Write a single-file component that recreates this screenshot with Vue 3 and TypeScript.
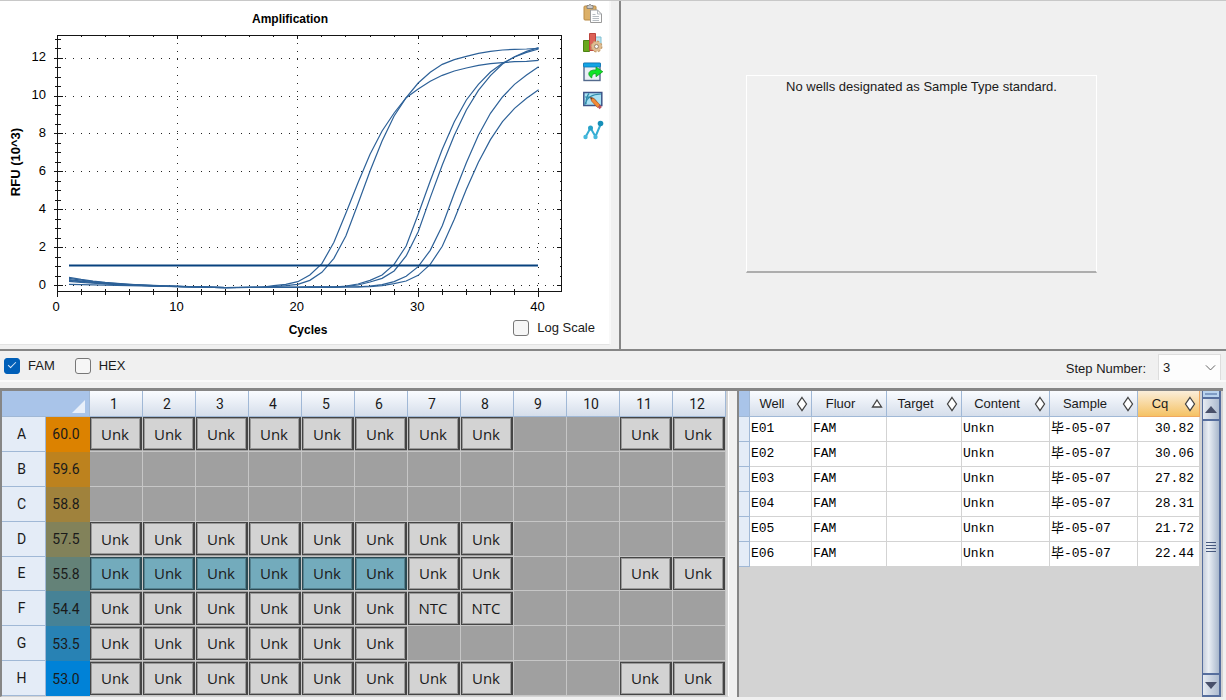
<script setup lang="ts">
import { ref } from 'vue'

interface Result {
  well: string
  fluor: string
  target: string
  content: string
  sample: string
  cq: string
}

interface PlateRow {
  name: string
  temp: string
  color: string
  wells: string[]
}

const logScale = ref(false)
const fam = ref(true)
const hex = ref(false)
const step = ref('3')

const xOf = (cycle: number): number => 57 + cycle * 12.04
const yOf = (rfu: number): number => 284.5 - rfu * 18.95

const xMinor = Array.from({ length: 20 }, (_, i) => i * 2 + 2)
const xMajor = [0, 10, 20, 30, 40]
const yMajor = [0, 2, 4, 6, 8, 10, 12]
const yMinor = Array.from({ length: 27 }, (_, i) => i * 0.5)

/* Each trace lists plot heights, three units per drawing unit, from its first cycle up to cycle 40. */
const traces: { start: number; first: number; values: number[] }[] = [
  { start: 832, first: 18, values: [854, 850, 842, 822, 788, 724, 636, 545, 460, 390, 336, 290, 264, 241, 223, 210, 201, 193, 188, 185, 182, 181, 178] },
  { start: 836, first: 18, values: [857, 854, 850, 838, 814, 772, 704, 608, 510, 420, 345, 290, 246, 214, 190, 176, 166, 157, 151, 147, 145, 144, 142] },
  { start: 829, first: 24, values: [855, 849, 838, 822, 790, 735, 640, 540, 445, 362, 297, 250, 213, 187, 168, 154, 144] },
  { start: 841, first: 24, values: [856, 852, 843, 832, 810, 765, 692, 590, 492, 403, 327, 268, 224, 189, 167, 151, 140] },
  { start: 838, first: 26, values: [855, 851, 842, 826, 797, 748, 674, 577, 485, 403, 337, 288, 250, 222, 197] },
  { start: 850, first: 26, values: [857, 854, 848, 840, 823, 790, 736, 655, 565, 484, 416, 362, 322, 292, 266] },
]

const tracePoints = traces.map(({ start, first, values }) => {
  const points: string[] = []
  for (let c = 1; c < first; c++) {
    const floor = c < 14 ? 860 - (14 - c) * 0.6 : 860 - (c - 14) * 0.2
    const y = floor - (floor - start) * Math.exp(-(c - 1) / 3.2)
    points.push(`${xOf(c)},${y / 3}`)
  }
  values.forEach((v, i) => points.push(`${xOf(first + i)},${v / 3}`))
  return points.join(' ')
})

const plateColumns = Array.from({ length: 12 }, (_, i) => i + 1)
const fill = (n: number, tail = 0): string[] =>
  plateColumns.map((c) => (c <= n || c > 12 - tail ? 'Unk' : ''))

const plate: PlateRow[] = [
  { name: 'A', temp: '60.0', color: '#dc8200', wells: fill(8, 2) },
  { name: 'B', temp: '59.6', color: '#bd821e', wells: fill(0) },
  { name: 'C', temp: '58.8', color: '#a0823c', wells: fill(0) },
  { name: 'D', temp: '57.5', color: '#82825a', wells: fill(8) },
  { name: 'E', temp: '55.8', color: '#648278', wells: fill(8, 2) },
  { name: 'F', temp: '54.4', color: '#468296', wells: fill(6).map((w, i) => (i === 6 || i === 7 ? 'NTC' : w)) },
  { name: 'G', temp: '53.5', color: '#2882b4', wells: fill(6) },
  { name: 'H', temp: '53.0', color: '#0082d7', wells: fill(8, 2) },
]
const isSelected = (row: string, index: number): boolean => row === 'E' && index < 6

const headers = ['Well', 'Fluor', 'Target', 'Content', 'Sample', 'Cq']
const results: Result[] = ['30.82', '30.06', '27.82', '28.31', '21.72', '22.44'].map((cq, i) => ({
  well: `E0${i + 1}`,
  fluor: 'FAM',
  target: '',
  content: 'Unkn',
  sample: '毕-05-07',
  cq,
}))
</script>

<template>
  <main class="app">
    <section class="top">
      <div class="chart-panel">
        <svg class="chart" viewBox="0 0 575 343" role="img" aria-label="Amplification">
          <g class="grid">
            <line v-for="v in yMajor" :key="'gy' + v" x1="65" x2="561" :y1="yOf(v)" :y2="yOf(v)" />
            <line v-for="v in xMajor.slice(1)" :key="'gx' + v" y1="42" y2="290" :x1="xOf(v)" :x2="xOf(v)" />
          </g>
          <g class="axis">
            <rect x="57.5" y="34.5" width="504" height="256" />
            <line v-for="v in yMinor" :key="'my' + v" x1="55" x2="61" :y1="yOf(v)" :y2="yOf(v)" />
            <line v-for="v in yMinor" :key="'ry' + v" x1="560" x2="562" :y1="yOf(v)" :y2="yOf(v)" />
            <line v-for="v in yMajor" :key="'ay' + v" x1="54" x2="63" :y1="yOf(v)" :y2="yOf(v)" />
            <line v-for="v in yMajor" :key="'by' + v" x1="557" x2="562" :y1="yOf(v)" :y2="yOf(v)" />
            <line v-for="v in xMinor" :key="'mx' + v" y1="288" y2="294" :x1="xOf(v)" :x2="xOf(v)" />
            <line v-for="v in xMinor" :key="'tx' + v" y1="34" y2="36" :x1="xOf(v)" :x2="xOf(v)" />
            <line v-for="v in xMajor" :key="'ax' + v" y1="287" y2="296" :x1="xOf(v) + (v ? 0 : 0.5)" :x2="xOf(v) + (v ? 0 : 0.5)" />
            <line v-for="v in xMajor" :key="'bx' + v" y1="34" y2="38" :x1="xOf(v)" :x2="xOf(v)" />
          </g>
          <polyline v-for="(p, i) in tracePoints" :key="i" class="trace" :points="p" />
          <line class="threshold" x1="69" x2="538" y1="264.5" y2="264.5" />
          <g class="ticks">
            <text v-for="v in yMajor" :key="'ly' + v" x="46" :y="yOf(v) + 3" text-anchor="end">{{ v }}</text>
            <text v-for="v in xMajor" :key="'lx' + v" :x="xOf(v) - 1" y="310" text-anchor="middle">{{ v }}</text>
          </g>
          <g class="titles">
            <text x="290" y="22" text-anchor="middle">Amplification</text>
            <text x="308" y="333" text-anchor="middle">Cycles</text>
            <text class="y-title" transform="translate(20 161) rotate(-90)" text-anchor="middle">RFU (10^3)</text>
          </g>
        </svg>
        <div class="tools">
          <button type="button" aria-label="Copy">
            <svg viewBox="0 0 20 20">
              <rect x="1" y="2" width="12" height="14" rx="1" fill="#dcb068" stroke="#b98a45" />
              <path d="M4 1.5h1.500Q7-.8 8.500 1.500H10v3H4z" fill="#c9c9c9" stroke="#777" stroke-width=".8" />
              <path d="M7.500 6h7l4 4v8.500h-11z" fill="#fdfdfd" stroke="#9a9a9a" />
              <path d="M14.500 6v4h4M9.500 12.500h6.500M9.500 14.500h6.500M9.500 16.500h6.500M9.500 10.500h3" fill="none" stroke="#a3abb3" stroke-width=".8" />
            </svg>
          </button>
          <button type="button" aria-label="Chart settings">
            <svg viewBox="0 0 20 20">
              <path d="M.5 7.500h6v11h-6z" fill="#69a71c" stroke="#4d8314" />
              <path d="M12.500 4h5.500v10h-5.500z" fill="#bde6f1" stroke="#80bfd2" />
              <path d="M6.500.5h6v17h-6z" fill="#dc6258" stroke="#bc453d" />
              <circle cx="13.500" cy="13.500" r="5" fill="#deb985" stroke="#c79d6c" stroke-width="2" stroke-dasharray="2.200 1.700" />
              <circle cx="13.500" cy="13.500" r="4.800" fill="#dfbc90" />
              <circle cx="13.500" cy="13.500" r="2" fill="#f6f6f4" stroke="#9c8267" />
            </svg>
          </button>
          <button type="button" aria-label="Export">
            <svg viewBox="0 0 20 20">
              <rect x="1" y="1.500" width="16" height="17" fill="#e9eef4" stroke="#53698c" stroke-width="1.400" />
              <rect x=".5" y="1" width="17" height="4" rx="1" fill="#12a4e4" stroke="#0876b8" stroke-width=".8" />
              <path d="M13 5l6.800 4.700-6.800 5v-3c-2.800-.3-4 .8-4.300 4.300C3.500 12.500 5.500 7.500 13 8z" fill="#0ee525" stroke="#149a25" stroke-width=".8" />
            </svg>
          </button>
          <button type="button" aria-label="Edit plot">
            <svg viewBox="0 0 20 20">
              <rect x=".8" y="1.500" width="18" height="13" fill="#a9e2f4" stroke="#3d5488" stroke-width="1.500" />
              <path d="M2 13.500C4 5 10 3 18 3M2 6C9 5 13 8 15 14M6 2.500C3 6 3 9 3 13" fill="none" stroke="#318cab" stroke-width="1.200" />
              <path d="M7.500 6.500l3.500 1 6 6.500-2.500 2.500-6-6.500z" fill="#f28a35" stroke="#b45420" stroke-width=".7" />
              <path d="M7.500 6.500l2.200.7-1.600 1.600z" fill="#623c25" />
              <path d="M14.800 16.300l2.300-2.300 1.800 2-2.300 2.300z" fill="#bd5260" />
            </svg>
          </button>
          <button type="button" aria-label="Show trace">
            <svg viewBox="0 0 20 20">
              <path d="M2.500 17L7.500 8l5 8.500L18 3.500" fill="none" stroke="#35acd2" stroke-width="2" />
              <circle cx="2.500" cy="17" r="2.200" fill="#46b9dc" />
              <circle cx="7.500" cy="8" r="2.500" fill="#28a2c8" />
              <circle cx="12.500" cy="17" r="2.200" fill="#46b9dc" />
              <circle cx="17.500" cy="3.500" r="2.800" fill="#168fb8" />
            </svg>
          </button>
        </div>
        <label class="check log"><input v-model="logScale" type="checkbox" />Log Scale</label>
      </div>
      <div class="standard-panel">
        <p class="notice">No wells designated as Sample Type standard.</p>
      </div>
    </section>

    <section class="filters">
      <label class="check"><input v-model="fam" type="checkbox" />FAM</label>
      <label class="check"><input v-model="hex" type="checkbox" />HEX</label>
      <label class="step-label" for="step">Step Number:</label>
      <span class="select">
        <select id="step" v-model="step">
          <option>1</option>
          <option>2</option>
          <option>3</option>
        </select>
        <svg viewBox="0 0 12 8"><path d="M1 1.500l5 5 5-5" fill="none" stroke="#555" /></svg>
      </span>
    </section>

    <section class="bottom">
      <div class="plate-panel">
        <table class="plate">
          <colgroup>
            <col class="c-row" />
            <col class="c-row" />
            <col v-for="c in plateColumns" :key="c" />
          </colgroup>
          <thead>
            <tr>
              <th colspan="2" class="corner"><svg viewBox="0 0 13 13"><path d="M13 0v13H0z" fill="#e8effa" /></svg></th>
              <th v-for="c in plateColumns" :key="c" scope="col">{{ c }}</th>
            </tr>
          </thead>
          <tbody>
            <tr v-for="r in plate" :key="r.name">
              <th scope="row">{{ r.name }}</th>
              <td class="temp" :style="{ backgroundColor: r.color }">{{ r.temp }}</td>
              <td v-for="(w, i) in r.wells" :key="i" class="cell">
                <div v-if="w" class="well" :class="{ selected: isSelected(r.name, i) }">{{ w }}</div>
              </td>
            </tr>
          </tbody>
        </table>
      </div>

      <div class="results-panel">
        <div class="results-body">
          <table class="results">
            <colgroup>
              <col class="w-mark" />
              <col class="w-well" />
              <col class="w-mid" />
              <col class="w-mid" />
              <col class="w-wide" />
              <col class="w-wide" />
              <col class="w-well" />
            </colgroup>
            <thead>
              <tr>
                <td class="mark"></td>
                <th v-for="h in headers" :key="h" scope="col" :class="{ active: h === 'Cq' }">
                  <div class="head">
                    <span>{{ h }}</span>
                    <svg viewBox="0 0 12 16">
                      <path v-if="h === 'Fluor'" d="M6 4l4.500 7h-9z" />
                      <path v-else d="M6 1.500l4.500 6.500L6 14.500 1.500 8z" />
                    </svg>
                  </div>
                </th>
              </tr>
            </thead>
            <tbody>
              <tr v-for="r in results" :key="r.well">
                <td class="mark"></td>
                <td>{{ r.well }}</td>
                <td>{{ r.fluor }}</td>
                <td>{{ r.target }}</td>
                <td>{{ r.content }}</td>
                <td>{{ r.sample }}</td>
                <td class="num">{{ r.cq }}</td>
              </tr>
            </tbody>
          </table>
        </div>
        <div class="scrollbar">
          <div class="split"></div>
          <button type="button" aria-label="Scroll up"><svg viewBox="0 0 12 7"><path d="M6 0l6 7H0z" fill="#48506a" /></svg></button>
          <div class="thumb"><i></i><i></i><i></i><i></i></div>
          <button type="button" aria-label="Scroll down"><svg viewBox="0 0 12 7"><path d="M0 0h12L6 7z" fill="#48506a" /></svg></button>
        </div>
      </div>
    </section>
  </main>
</template>

<style>
body {
  margin: 0;
  background: #f0f0f0;
}
</style>

<style scoped>
.app {
  box-sizing: border-box;
  min-height: 100vh;
  display: flex;
  flex-direction: column;
  background: #f0f0f0;
  color: #1a1a1a;
  font: 13px/20px "Liberation Sans", Arial, sans-serif;
}
.top {
  display: grid;
  grid-template-columns: 619fr 607fr;
  border-top: 1px solid #c8c8c8;
  border-bottom: 2px solid #868686;
}
.chart-panel {
  position: relative;
  display: flex;
  align-items: flex-start;
  margin: 0 8px 4px 0;
  background: #fff;
  border-right: 2px solid #f8f8f8;
  border-bottom: 1px solid #e3e3e3;
}
.chart {
  flex: 1;
  min-width: 0;
  display: block;
  font-size: 12px;
}
.grid line {
  stroke: #222;
  stroke-dasharray: 1 7;
  shape-rendering: crispEdges;
}
.axis line,
.axis rect {
  fill: none;
  stroke: #151515;
  shape-rendering: crispEdges;
}
.trace {
  fill: none;
  stroke: #2d6198;
  stroke-width: 1.2;
}
.threshold {
  stroke: #08427f;
  stroke-width: 2.2;
}
.ticks {
  font-size: 13px;
}
.titles {
  font-weight: bold;
}
.y-title {
  font-size: 13px;
}
.tools {
  display: flex;
  flex-direction: column;
  gap: 9px;
  width: 26px;
  padding: 3px 0 0 8px;
}
.tools button {
  width: 20px;
  height: 20px;
  padding: 0;
  border: 0;
  background: none;
}
.tools svg {
  display: block;
  width: 20px;
  height: 20px;
  overflow: visible;
}
.check {
  display: flex;
  align-items: center;
  gap: 8px;
}
.check input {
  appearance: none;
  display: grid;
  place-items: center;
  box-sizing: border-box;
  width: 16px;
  height: 16px;
  margin: 0;
  border: 1px solid #777;
  border-radius: 3px;
  background: #f6f6f6;
}
.check input:checked {
  border-color: #005fb8;
  background: #005fb8;
}
.check input:checked::after {
  content: "";
  width: 7px;
  height: 3px;
  margin-bottom: 3px;
  border-left: 1px solid #dbeafa;
  border-bottom: 1px solid #dbeafa;
  transform: rotate(-45deg);
}
.log {
  position: absolute;
  right: 14px;
  bottom: 6px;
}
.standard-panel {
  display: flex;
  justify-content: center;
  align-items: center;
  border-left: 2px solid #868686;
}
.notice {
  box-sizing: border-box;
  width: 58%;
  height: 198px;
  margin: 0 4px 3px 0;
  padding-top: 1px;
  text-align: center;
  border: 1px solid #fff;
  border-bottom: 2px solid #adadad;
}
.filters {
  display: flex;
  align-items: center;
  gap: 20px;
  height: 29px;
  padding: 0 5px 0 4px;
  border-bottom: 2px solid #fafafa;
}
.step-label {
  margin: 6px -8px 0 auto;
}
.select {
  position: relative;
  align-self: flex-end;
}
.select select {
  appearance: none;
  box-sizing: border-box;
  display: block;
  width: 63px;
  height: 26px;
  padding: 0 4px;
  border: 1px solid #ddd;
  border-bottom: 0;
  border-radius: 0;
  background: #fdfdfd;
  color: #1a1a1a;
  font: inherit;
}
.select svg {
  position: absolute;
  right: 5px;
  top: 10px;
  width: 11px;
  pointer-events: none;
}
.bottom {
  flex: 1;
  display: grid;
  grid-template-columns: 738fr 485fr;
  margin: 6px 3px 3px 0;
  border-top: 3px solid #868686;
}
.plate-panel {
  margin-right: 8px;
  padding-right: 2px;
  background: #d3d3d3;
  border-left: 2px solid #868686;
  border-right: 1px solid #fff;
  border-bottom: 1px solid #d3d3d3;
}
.plate {
  width: 100%;
  height: 100%;
  table-layout: fixed;
  border-spacing: 0;
  font: 14px/20px Roboto, "Liberation Sans", sans-serif;
}
.plate th,
.plate td {
  box-sizing: border-box;
  height: 34px;
  padding: 0;
  font-weight: normal;
  text-align: center;
  border-right: 1px solid #c6c6c6;
  border-bottom: 1px solid #c6c6c6;
}
.plate thead th {
  height: 26px;
  padding-right: 4px;
  border-color: #a0b8d6;
  background: linear-gradient(#fafcff, #d5deeb);
}
.plate thead .corner {
  padding: 0;
  background: #a9c4e9;
}
.corner svg {
  display: block;
  width: 13px;
  margin: 6px 4px 0 auto;
}
.c-row {
  width: 44px;
}
.plate tbody th {
  border-color: #a0b8d6;
  background: #e4ecf7;
  padding-right: 4px;
}
.plate .temp {
  border: 0;
  padding-right: 4px;
}
.plate .cell {
  background: #a0a0a0;
  padding: 0;
}
.well {
  display: flex;
  align-items: center;
  justify-content: center;
  box-sizing: border-box;
  height: 33px;
  padding-right: 1px;
  border: solid #454545;
  border-width: 1px 2px 1px 1px;
  background: #d3d3d3;
  box-shadow: inset 0 0 0 1px #999;
  font: 15px/20px "Open Sans", "Noto Sans", sans-serif;
}
.well.selected {
  border-color: #2c4a53;
  background: #73abbc;
  box-shadow: inset 0 0 0 1px #55818f;
}
.results-panel {
  display: flex;
  gap: 2px;
  background: #d3d3d3;
  border-left: 2px solid #868686;
}
.results-body {
  flex: 1;
  min-width: 0;
}
.results {
  width: 100%;
  table-layout: fixed;
  border-spacing: 0;
  font: 13px/20px "Liberation Mono", "Noto Sans CJK SC", monospace;
  color: #000;
}
.w-mark {
  width: 11px;
}
.w-well {
  width: 62px;
}
.w-mid {
  width: 75px;
}
.w-wide {
  width: 88px;
}
.results th,
.results td {
  box-sizing: border-box;
  height: 25px;
  padding: 0 0 0 1px;
  background: #fff;
  border-right: 1px solid #d3d3d3;
  border-bottom: 1px solid #d3d3d3;
  white-space: nowrap;
}
.results thead th {
  height: 26px;
  padding: 0 3px 0 0;
  font: 13px/20px "Liberation Sans", Arial, sans-serif;
  color: #1a1a1a;
  border-color: #a0b8d6;
  background: linear-gradient(#fafcff, #d5deeb);
}
.results thead .active {
  border-color: #f0a860;
  background: linear-gradient(#fbeeda, #f5c264);
}
.results .mark {
  border-color: #a0b8d6;
  background: #e4ecf7;
}
.results thead .mark {
  background: #a9c4e9;
}
.results .num {
  padding-right: 5px;
  text-align: right;
}
.head {
  display: flex;
  align-items: center;
}
.head span {
  flex: 1;
  padding-right: 2px;
  text-align: center;
}
.head svg {
  width: 12px;
  height: 16px;
  fill: #fff;
  stroke: #444;
  stroke-width: 1.3;
}
.scrollbar {
  box-sizing: border-box;
  display: flex;
  flex-direction: column;
  width: 19px;
  margin-right: 2px;
  border: solid #566e9d;
  border-width: 0 2px 2px 1px;
  background: #566e9d;
}
.split {
  box-sizing: border-box;
  height: 6px;
  margin-bottom: 2px;
  border: 2px solid #b9d3ee;
  background: #7f9cc5;
}
.scrollbar button {
  display: grid;
  place-items: center;
  height: 20px;
  padding: 0;
  border: 0;
  background: linear-gradient(90deg, #e6ebf2, #aebcd0);
}
.scrollbar svg {
  width: 12px;
}
.thumb {
  flex: 1;
  display: flex;
  flex-direction: column;
  align-items: center;
  justify-content: center;
  gap: 2px;
  margin: 2px 0;
  background: linear-gradient(90deg, #c5cddb, #eaeff5 35%, #a9b8cc);
}
.thumb i {
  width: 10px;
  height: 1px;
  background: #46587e;
}
</style>
